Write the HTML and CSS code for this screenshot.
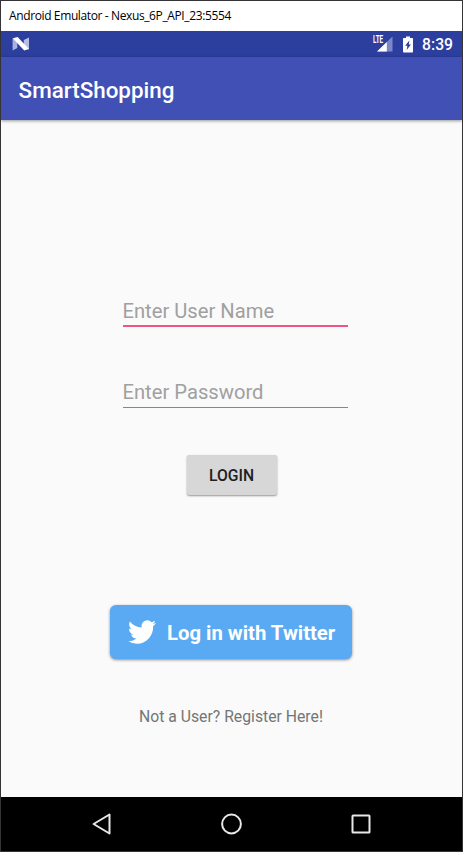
FILE: index.html
```html
<!DOCTYPE html>
<html lang="en">
<head>
<meta charset="utf-8">
<title>SmartShopping</title>
<link rel="stylesheet" href="styles.css">
</head>
<body>
<div class="window">
  <div class="titlebar"><span class="titlebar-text">Android Emulator - Nexus_6P_API_23:5554</span></div>
  <div class="statusbar">
    <svg class="n-icon" width="18" height="16" viewBox="0 0 18 16">
      <path d="M.6 2.2 5.3 4V12L.6 14.5z" fill="#aab3e0"/>
      <path d="M11.8 4 17 1.5V13.6L11.8 12z" fill="#b5bde5"/>
      <path d="M.8 2.3 5.6 1 17 13 12.2 14.5z" fill="#fff"/>
    </svg>
    <div class="status-right">
      <div class="signal">
        <svg width="22" height="18" viewBox="0 0 22 18">
          <path d="M20.5 1.5V16.5H5z" fill="#7c87c9"/>
          <path d="M14.8 7V16.5H5z" fill="#fff"/>
        </svg>
        <span class="lte">LTE</span>
      </div>
      <svg class="battery" width="12" height="17" viewBox="0 0 12 17">
        <path d="M4 .5H8V2H10.3Q11 2 11 2.7V15.8Q11 16.5 10.3 16.5H1.7Q1 16.5 1 15.8V2.7Q1 2 1.7 2H4z" fill="#fff"/>
        <path d="M7.3 4.5 3.2 9.8H5.4L4.7 14 8.9 8.5H6.8z" fill="#2b3d9c"/>
      </svg>
      <span class="clock">8:39</span>
    </div>
  </div>
  <header class="appbar"><span class="app-title">SmartShopping</span></header>
  <main class="content">
    <div class="field focused"><span class="hint">Enter User Name</span></div>
    <div class="field"><span class="hint">Enter Password</span></div>
    <button class="login">LOGIN</button>
    <button class="twitter">
      <svg width="28" height="24" viewBox="0 0 24 20" preserveAspectRatio="none">
        <path fill="#fff" d="M23.95 2.57a10 10 0 0 1-2.82.77 4.96 4.96 0 0 0 2.16-2.72c-.95.55-2 .95-3.13 1.18a4.92 4.92 0 0 0-8.38 4.48C7.69 6.09 4.07 4.13 1.64 1.16a4.82 4.82 0 0 0-.67 2.48c0 1.71.87 3.21 2.19 4.1a4.9 4.9 0 0 1-2.23-.62v.06a4.92 4.92 0 0 0 3.95 4.83 5 5 0 0 1-2.21.08 4.94 4.94 0 0 0 4.6 3.42A9.87 9.87 0 0 1 0 17.54a14 14 0 0 0 7.56 2.21c9.05 0 14-7.5 14-13.98 0-.21 0-.42-.02-.63a9.94 9.94 0 0 0 2.46-2.55z"/>
      </svg>
      <span>Log in with Twitter</span>
    </button>
    <a class="register">Not a User? Register Here!</a>
  </main>
  <nav class="navbar">
    <svg width="22" height="24" viewBox="0 0 22 24"><path d="M18.5 2.5V21.5L2.6 12z"/></svg>
    <svg width="24" height="24" viewBox="0 0 24 24"><circle cx="11.5" cy="12" r="9.4"/></svg>
    <svg width="22" height="24" viewBox="0 0 22 24"><rect x="2.5" y="3.5" width="17" height="17" rx=".6"/></svg>
  </nav>
</div>
</body>
</html>
```
FILE: styles.css
```css
* { box-sizing: border-box; }
body { margin: 0; font-family: Roboto, sans-serif; }
.window {
  width: 463px;
  height: 852px;
  border: 1px solid #353336;
  background: #fafafa;
  display: flex;
  flex-direction: column;
  overflow: hidden;
}
.titlebar {
  height: 30px;
  flex: none;
  background: #fff;
  padding-left: 8px;
  font: 12px/30px "Open Sans", sans-serif;
  letter-spacing: -0.38px;
  color: #000;
}
.statusbar {
  height: 26px;
  flex: none;
  background: #2c3e9e;
  display: flex;
  align-items: center;
  justify-content: space-between;
  padding: 0 9px 0 11px;
}
.status-right { display: flex; align-items: center; }
.signal { position: relative; height: 18px; margin-right: 8px; }
.signal svg { display: block; }
.lte {
  position: absolute;
  left: 1px;
  top: 0;
  font: bold 10px/9px Roboto, sans-serif;
  color: #fff;
  transform: scaleX(.63);
  transform-origin: left;
}
.battery { margin-right: 8px; }
.clock { font-size: 15.7px; font-weight: 500; line-height: 26px; color: #fff; padding-top: 2px; }
.appbar {
  height: 63px;
  flex: none;
  background: #4050b5;
  box-shadow: 0 1px 3px rgba(0,0,0,.4);
  padding-left: 17.6px;
  font-size: 22.4px;
  font-weight: 500;
  line-height: 66px;
  color: #fff;
}
.content {
  flex: 1;
  display: flex;
  flex-direction: column;
  align-items: center;
  padding-top: 177px;
  padding-right: 1px;
}
.field {
  width: 225px;
  height: 31px;
  margin-left: 8px;
  border-bottom: 1px solid #868686;
  font-size: 20.2px;
  line-height: 31px;
  color: #a0a0a0;
}
.focused { height: 30px; line-height: 29px; border-bottom: 2px solid #f05482; margin-bottom: 50px; }
button { border: 0; padding: 0; font-family: Roboto, sans-serif; }
.login {
  width: 90px;
  height: 40px;
  margin-top: 47px;
  margin-left: 1px;
  border-radius: 2px;
  background: #d7d7d7;
  box-shadow: 0 1px 2px rgba(0,0,0,.4);
  font-size: 15.7px;
  font-weight: 500;
  color: #202020;
}
.twitter {
  width: 242px;
  height: 54px;
  margin-top: 110px;
  padding-left: 18px;
  border-radius: 6px;
  background: #5aaaf3;
  box-shadow: 0 1px 3px rgba(0,0,0,.45);
  display: flex;
  align-items: center;
  gap: 11px;
  font-size: 20.3px;
  font-weight: 700;
  color: #fff;
  white-space: nowrap;
}
.twitter span { padding-top: 1px; }
.register { margin-top: 48px; font-size: 15.75px; line-height: 20px; color: #757575; }
.navbar {
  height: 54px;
  flex: none;
  background: #000;
  display: flex;
  align-items: center;
  justify-content: space-between;
  padding: 0 90px;
}
.navbar svg { fill: none; stroke: #e8e8e8; stroke-width: 2; stroke-linejoin: round; }
```
